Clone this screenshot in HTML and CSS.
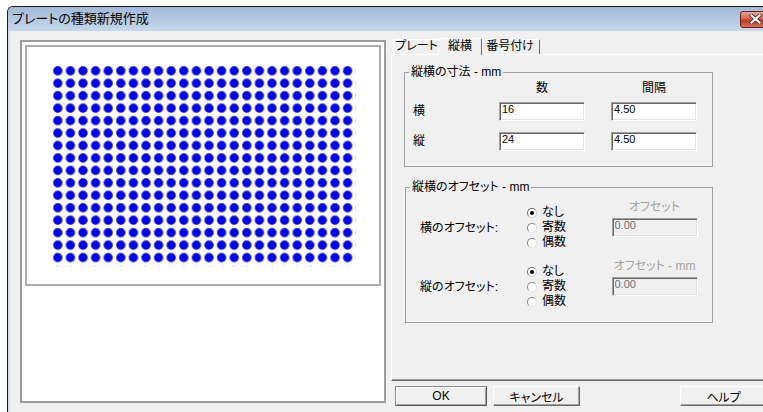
FILE: index.html
```html
<!DOCTYPE html>
<html>
<head>
<meta charset="utf-8">
<title>プレートの種類新規作成</title>
<link rel="stylesheet" href="styles.css">
</head>
<body>
<div class="window">
  <div class="titlebar">
    <span class="title">プレートの種類新規作成</span>
    <span class="close">
      <svg width="13" height="10" viewBox="0 0 13 10">
        <path d="M2.5 1.5 L10.5 8.5 M10.5 1.5 L2.5 8.5" stroke="#5a2a22" stroke-width="3.8" stroke-linecap="square"/>
        <path d="M2.5 1.5 L10.5 8.5 M10.5 1.5 L2.5 8.5" stroke="#fff" stroke-width="2.2" stroke-linecap="square"/>
      </svg>
    </span>
  </div>

  <div class="client">
    <!-- plate preview -->
    <div class="preview">
      <div class="plate">
        <svg class="wells" width="303" height="200" viewBox="0 0 303 200">
          <defs>
            <pattern id="well" width="12.6" height="12.45" patternUnits="userSpaceOnUse">
              <circle cx="4.8" cy="4.8" r="4.5" fill="#0000ff" stroke="#3c3c78" stroke-width="0.5"/>
            </pattern>
          </defs>
          <rect width="302.4" height="199.2" fill="url(#well)"/>
        </svg>
      </div>
    </div>

    <div class="side">
      <div class="tabs">
        <span class="tab t1">プレート</span>
        <span class="tab t2 active">縦横</span>
        <span class="tab t3">番号付け</span>
      </div>

      <div class="panel">
        <fieldset class="group">
          <legend>縦横の寸法 - mm</legend>
          <div class="dims">
            <span></span>
            <span class="head">数</span>
            <span class="head">間隔</span>
            <span class="lbl">横</span>
            <input class="field" value="16">
            <input class="field" value="4.50">
            <span class="lbl">縦</span>
            <input class="field" value="24">
            <input class="field" value="4.50">
          </div>
        </fieldset>

        <fieldset class="group second">
          <legend>縦横のオフセット - mm</legend>
          <div class="offset">
            <span class="olbl">横のオフセット:</span>
            <div class="radios">
              <label class="radio"><span class="mark on"></span>なし</label>
              <label class="radio"><span class="mark"></span>寄数</label>
              <label class="radio"><span class="mark"></span>偶数</label>
            </div>
            <div class="amount">
              <span class="cap">オフセット</span>
              <input class="field" value="0.00" disabled>
            </div>
          </div>
          <div class="offset">
            <span class="olbl">縦のオフセット:</span>
            <div class="radios">
              <label class="radio"><span class="mark on"></span>なし</label>
              <label class="radio"><span class="mark"></span>寄数</label>
              <label class="radio"><span class="mark"></span>偶数</label>
            </div>
            <div class="amount">
              <span class="cap">オフセット - mm</span>
              <input class="field" value="0.00" disabled>
            </div>
          </div>
        </fieldset>
      </div>

      <div class="buttons">
        <button class="btn default">OK</button>
        <button class="btn">キャンセル</button>
        <button class="btn help">ヘルプ</button>
      </div>
    </div>
  </div>
</div>
</body>
</html>
```

FILE: styles.css
```css
body { margin:0; background:#fff; overflow:hidden; color:#000;
  font-family:"Liberation Sans", "Noto Sans CJK JP", sans-serif; font-size:12px; font-feature-settings:"palt"; }

.window { margin:6px 0 0 7px; width:790px; height:420px; display:flex; flex-direction:column;
  border:1px solid #1b1b1b; border-right:0; border-bottom:0; border-radius:6px 0 0 0;
  background:#d6e2ef; overflow:hidden; }

.titlebar { height:24px; flex:none; display:flex; align-items:center; padding-left:4px;
  background:linear-gradient(#a2bbd9, #c4d7ec); }
.title { font-size:13px; line-height:16px; }
.close { margin-left:auto; margin-right:27px; width:31px; height:17px; box-sizing:border-box;
  display:flex; align-items:center; justify-content:center;
  border:1px solid #6b2418; border-radius:3px;
  background:linear-gradient(#e8a696, #d26049 48%, #c13a20 52%, #d86c52); }
.close svg { display:block; }

.client { flex:1; display:flex; margin-left:2px; background:#f0f0f0; padding-left:10px; }

/* plate preview */
.preview { width:366px; height:363px; box-sizing:border-box; flex:none; margin-top:9px;
  border:2px solid #9c9c9c; padding:3px; background:#fff; }
.plate { width:356px; height:241px; box-sizing:border-box; border:2px solid #ababab;
  padding:19px 0 0 26px; }
.wells { display:block; }

/* right side */
.side { margin-left:5px; width:400px; display:flex; flex-direction:column; }

.tabs { height:23px; box-sizing:border-box; display:flex; align-items:flex-end; padding-left:2px; }
.tab { height:15px; box-sizing:border-box; line-height:13px; text-align:center;
  border-top:1px solid #fff; border-left:1px solid #fff; border-right:1px solid #696969;
  border-radius:2px 2px 0 0; }
.t1 { width:47px; }
.t2 { width:40px; }
.t3 { width:60px; }
.tab.active { width:44px; height:17px; margin:0 -2px -1px; position:relative; z-index:1;
  background:#f0f0f0; line-height:14px; }

.panel { height:327px; box-sizing:border-box; padding:10px 0 0 12px;
  border:1px solid; border-color:#fff #696969 #696969 #fff;
  box-shadow:inset -1px -1px 0 #a0a0a0; }

.group { margin:0; padding:0; width:309px; box-sizing:border-box; border:1px solid #a0a0a0; }
.group legend { margin-left:4px; padding:0 2px; line-height:14px; }
.group.second { margin:13px 0 0 1px; width:308px; padding:6px 0 13px; }

.dims { display:grid; grid-template-columns:60px 86px 86px; column-gap:26px;
  grid-template-rows:21px 30px 19px; padding:2px 0 15px 8px; }
.head { text-align:center; line-height:14px; }
.lbl { line-height:19px; }

.field { width:86px; height:19px; box-sizing:border-box; margin:0; padding:0 2px 6px;
  font-family:"Liberation Sans Narrow", "Liberation Sans", sans-serif; font-size:11px; color:#000;
  background:#fff; border:1px solid; border-color:#a0a0a0 #fff #fff #a0a0a0;
  box-shadow:inset 1px 1px 0 #696969, inset -1px -1px 0 #e3e3e3; outline:none; }
.field:disabled { background:#f0f0f0; color:#6d6d6d; }

.offset { display:flex; height:50px; padding-left:14px; }
.offset + .offset { margin-top:9px; }
.olbl { width:107px; align-self:center; padding-top:5px; line-height:14px; }
.radios { width:85px; padding-top:5px; display:flex; flex-direction:column; }
.radio { height:15px; display:flex; align-items:center; gap:5px; line-height:15px; }
.mark { width:10px; height:10px; box-sizing:border-box; border-radius:50%; position:relative;
  border:1px solid; border-color:#8a8a8a #e0e0e0 #e0e0e0 #8a8a8a; background:#fff; }
.mark.on { border-color:#707070 #d0d0d0 #d0d0d0 #707070; }
.mark.on::after { content:""; position:absolute; left:2px; top:2px; width:4px; height:4px;
  border-radius:50%; background:#000; }
.amount { width:85px; display:flex; flex-direction:column; align-items:center; }
.cap { line-height:14px; color:#a3a3a3; margin-bottom:4px; white-space:nowrap; }

.buttons { display:flex; margin-top:5px; padding-left:4px; gap:6px; }
.btn { width:87px; height:20px; padding:0; font:inherit; color:#000; background:#f0f0f0;
  border:1px solid; border-color:#fff #696969 #696969 #fff;
  box-shadow:inset -1px -1px 0 #a0a0a0; }
.btn.default { width:92px; border-color:#8a8a8a #5a5a5a #5a5a5a #8a8a8a;
  box-shadow:inset 1px 1px 0 #fff, inset -1px -1px 0 #a0a0a0; }
.btn.help { margin-left:94px; }
```
